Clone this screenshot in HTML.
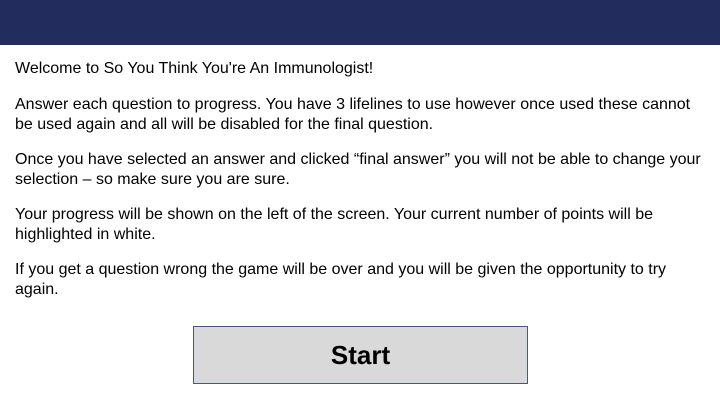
<!DOCTYPE html>
<html><head><style>
body{margin:0;width:720px;height:405px;background:#fff;position:relative;overflow:hidden;font-family:"Liberation Sans",Arial,sans-serif;color:#000}
.hdr{position:absolute;left:0;top:0;width:720px;height:45px;background:#222d5e}
p{position:absolute;left:15px;margin:0;font-size:16px;line-height:19.5px;width:705px;white-space:nowrap}
.btn{position:absolute;left:193px;top:326px;width:333px;height:56px;background:#d9d9d9;border:1px solid #4a5680;display:flex;align-items:center;justify-content:center;font-weight:bold;font-size:26px;line-height:1}
</style></head><body>
<div class="hdr"></div>
<p style="top:59px">Welcome to So You Think You're An Immunologist!</p>
<p style="top:95px">Answer each question to progress. You have 3 lifelines to use however once used these cannot<br>be used again and all will be disabled for the final question.</p>
<p style="top:150px">Once you have selected an answer and clicked “final answer” you will not be able to change your<br>selection – so make sure you are sure.</p>
<p style="top:205px">Your progress will be shown on the left of the screen. Your current number of points will be<br>highlighted in white.</p>
<p style="top:260px">If you get a question wrong the game will be over and you will be given the opportunity to try<br>again.</p>
<div class="btn">Start</div>
</body></html>
